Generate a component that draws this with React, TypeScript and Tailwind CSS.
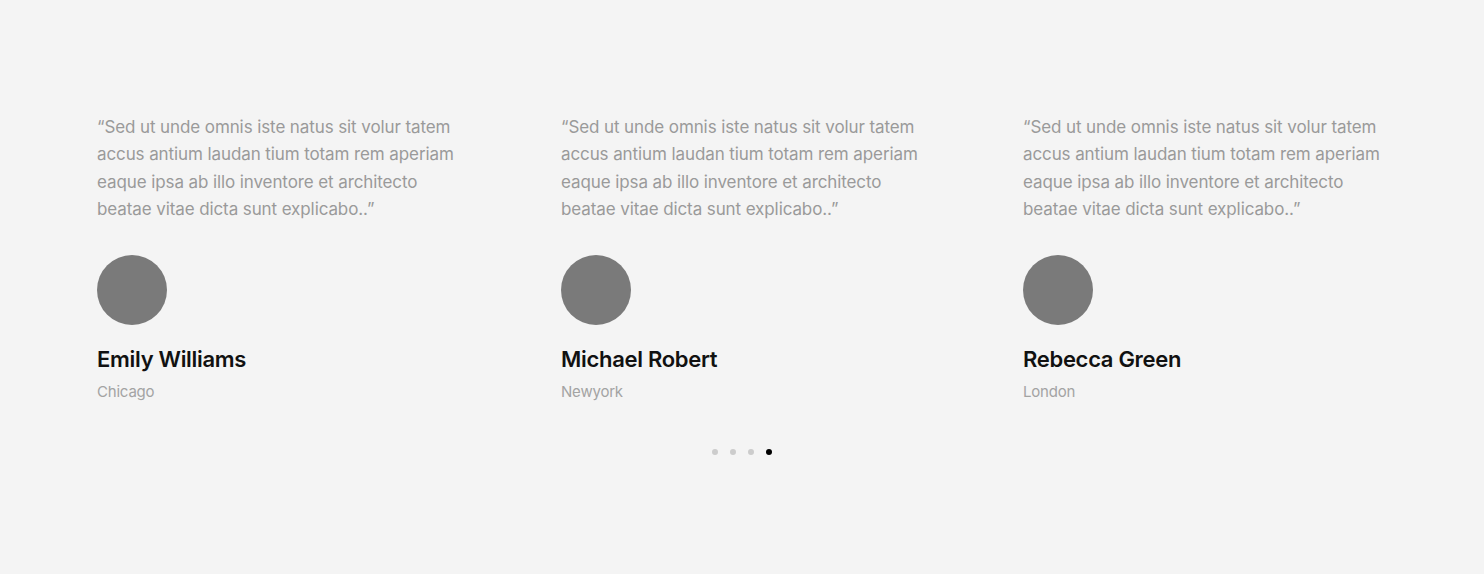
const testimonials = [
  { name: "Emily Williams", city: "Chicago" },
  { name: "Michael Robert", city: "Newyork" },
  { name: "Rebecca Green", city: "London" },
];

const quote =
  "“Sed ut unde omnis iste natus sit volur tatem accus antium laudan tium totam rem aperiam eaque ipsa ab illo inventore et architecto beatae vitae dicta sunt explicabo..”";

export default function App() {
  return (
    <div
      className="h-[574px] w-full bg-[#f4f4f4] pt-[114px]"
      style={{ fontFamily: "Inter, 'Noto Sans', sans-serif" }}
    >
      <div className="grid grid-cols-[464px_462px_400px] pl-[97px]">
        {testimonials.map((t) => (
          <div key={t.name} className="flex flex-col">
            <p className="w-[364px] text-[17px] leading-[27.3px] tracking-[-0.1px] text-[#9a9a9a]">
              {quote}
            </p>
            <div className="mt-[32px] h-[70px] w-[70px] rounded-full bg-[#7a7a7a]" />
            <h3 className="mt-[20px] text-[22px] font-semibold leading-[28px] tracking-[-0.3px] text-[#111]">
              {t.name}
            </h3>
            <span className="mt-[9px] text-[15px] leading-[20px] tracking-[-0.2px] text-[#a3a3a3]">
              {t.city}
            </span>
          </div>
        ))}
      </div>
      <div className="mt-[47px] flex justify-center gap-[12px]">
        <span className="h-[6px] w-[6px] rounded-full bg-[#cccccc]" />
        <span className="h-[6px] w-[6px] rounded-full bg-[#cccccc]" />
        <span className="h-[6px] w-[6px] rounded-full bg-[#cccccc]" />
        <span className="h-[6px] w-[6px] rounded-full bg-black" />
      </div>
    </div>
  );
}
